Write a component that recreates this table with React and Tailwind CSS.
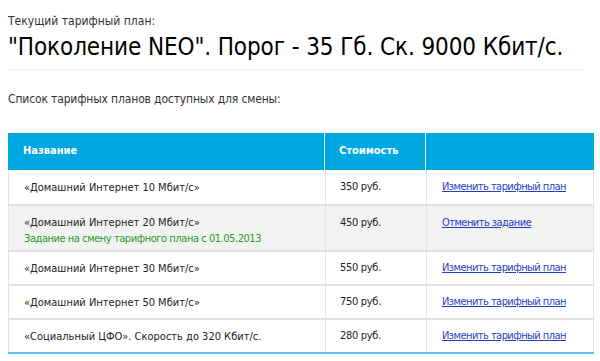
export default function App() {
  const rows = [
    { name: "«Домашний Интернет 10 Мбит/с»", price: "350 руб.", link: "Изменить тарифный план" },
    { name: "«Домашний Интернет 20 Мбит/с»", note: "Задание на смену тарифного плана с 01.05.2013", price: "450 руб.", link: "Отменить задание", grey: true },
    { name: "«Домашний Интернет 30 Мбит/с»", price: "550 руб.", link: "Изменить тарифный план" },
    { name: "«Домашний Интернет 50 Мбит/с»", price: "750 руб.", link: "Изменить тарифный план" },
    { name: "«Социальный ЦФО». Скорость до 320 Кбит/с.", price: "280 руб.", link: "Изменить тарифный план" },
  ];
  return (
    <div className="w-[600px] h-[361px] overflow-hidden bg-white px-2 pt-[13px] text-[#222]" style={{ fontFamily: '"DejaVu Sans Condensed", "DejaVu Sans", sans-serif' }}>
      <div className="text-[12px] leading-[16px] text-[#333]">Текущий тарифный план:</div>
      <div className="text-[24px] leading-[30px] tracking-[-0.1px] text-black mt-[3px] whitespace-nowrap">"Поколение NEO". Порог - 35 Гб. Ск. 9000 Кбит/с.</div>
      <div className="border-b border-[#eeeeee] mr-[6px] mt-[7px]"></div>
      <div className="text-[12px] leading-[16px] tracking-[-0.15px] text-[#333] mt-[21px]">Список тарифных планов доступных для смены:</div>
      <div className="mt-[26px] w-[586px] text-[11px]">
        <div className="grid grid-cols-[317px_101px_168px] bg-[#00a8e1] h-[37px] text-white font-bold items-stretch">
          <div className="flex items-center pl-[15px] border-r border-[#e6f6fc]">Название</div>
          <div className="flex items-center pl-[14px] border-r border-[#e6f6fc]">Стоимость</div>
          <div></div>
        </div>
        {rows.map((r, i) => (
          <div key={i} className={`grid grid-cols-[317px_101px_168px] border-l border-r border-[#e4e4e4] ${i === 0 ? "" : "border-t-2 border-t-[#e0e0e0]"} ${r.grey ? "bg-[#f2f2f2]" : "bg-white"} ${r.note ? "h-[46px]" : "h-[34px]"}`}>
            <div className={`pl-[15px] border-r border-[#e4e4e4] ${r.note ? "pt-[9px]" : "flex items-center"}`}>
              <div className="leading-[15px]">{r.name}</div>
              {r.note && <div className="leading-[15px] tracking-[-0.45px] text-[#2c9a2c] mt-[1px]">{r.note}</div>}
            </div>
            <div className={`pl-[14px] tracking-[-0.3px] border-r border-[#e4e4e4] ${r.note ? "pt-[9px] leading-[15px]" : "flex items-center"}`}>{r.price}</div>
            <div className={`pl-[15px] ${r.note ? "pt-[9px] leading-[15px]" : "flex items-center"}`}>
              <a href="#" className="text-[#1f3fbf] underline tracking-[-0.55px]">{r.link}</a>
            </div>
          </div>
        ))}
        <div className="h-[2px] bg-[#5ec3ef]"></div>
      </div>
    </div>
  );
}
